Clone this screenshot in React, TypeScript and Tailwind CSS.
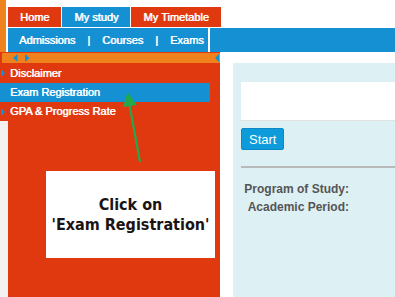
import React from 'react';

const menu = [
  { label: 'Disclaimer', active: false, arrow: true, h: 'h-[20px]' },
  { label: 'Exam Registration', active: true, arrow: false, h: 'h-[19px]' },
  { label: 'GPA & Progress Rate', active: false, arrow: true, h: 'h-[19px]' },
];

const tabs = [
  { label: 'Home', color: 'bg-[#e1390f]' },
  { label: 'My study', color: 'bg-[#1590d3]' },
  { label: 'My Timetable', color: 'bg-[#e1390f]' },
];

const shadow = '[text-shadow:0.6px_0_0_#fff]';

export default function App() {
  return (
    <div className="relative w-[395px] h-[297px] overflow-hidden bg-white font-['Liberation_Sans',Arial,sans-serif]">
      {/* Top navigation */}
      <div className="flex h-[52px]">
        <div className="w-[6px] bg-[#f0821e]" />
        <div className="w-[2px]" />
        <div className="flex-1 flex flex-col pt-[7px]">
          <div className="flex h-[20px] gap-px">
            {tabs.map((t) => (
              <div
                key={t.label}
                className={`${t.color} px-3 flex items-center text-[11px] text-white ${shadow}`}
              >
                {t.label}
              </div>
            ))}
          </div>
          <div className="flex h-[24px] mt-px gap-[2px]">
            <div className={`w-[200px] bg-[#1590d3] flex items-center pl-[11px] text-[11px] text-white ${shadow}`}>
              <span>Admissions</span>
              <span className="px-3">|</span>
              <span>Courses</span>
              <span className="px-3">|</span>
              <span>Exams</span>
            </div>
            <div className="flex-1 bg-[#1590d3]" />
          </div>
        </div>
      </div>

      <div className="flex">
        {/* Left side panel */}
        <div className="w-[220px] flex flex-col">
          <div className="bg-[#e1390f] pt-px">
            <div className="h-[10px] ml-[2px] bg-[#f0821e] relative">
              <svg width="220" height="10" className="absolute left-[-2px] top-0">
                <polygon points="17.5,1 13,5 17.5,9" fill="#1590d3" />
                <polygon points="25,1 29.5,5 25,9" fill="#1590d3" />
                <polygon points="219,1 215,5 219,9" fill="#1590d3" />
              </svg>
            </div>
            {menu.map((m) => (
              <div key={m.label} className={`${m.h} flex items-center relative`}>
                <div
                  className={`flex items-center h-full w-[210px] pl-[10px] text-[11px] text-white ${shadow} ${
                    m.active ? 'bg-[#1590d3]' : ''
                  }`}
                >
                  {m.label}
                </div>
                {m.arrow && (
                  <svg width="6" height="10" className="absolute left-px top-1/2 -translate-y-1/2">
                    <polygon points="0,1 4,5 0,9" fill="#1590d3" />
                  </svg>
                )}
              </div>
            ))}
          </div>
          <div className="flex h-[180px]">
            <div className="w-[8px] bg-[#f2f2f2]" />
            <div className="flex-1 bg-[#e1390f] pt-[50px] pl-[38px] pr-[5px]">
              <div className="h-[87px] bg-white flex flex-col items-center justify-center text-[16px] font-bold leading-[20px] text-[#1b1414] font-['DejaVu_Sans_Condensed','Liberation_Sans',sans-serif]">
                <span>Click on</span>
                <span>'Exam Registration'</span>
              </div>
            </div>
          </div>
        </div>

        <div className="w-[13px]" />

        {/* Main content */}
        <div className="flex-1 mt-[11px] bg-[#ddf0f3] pl-[8px] pt-[19px] h-[240px]">
          <div className="h-[39px] bg-white border-b border-[#e2e2e2]" />
          <button className="mt-[7px] h-[22px] px-[7px] bg-[#0d9bdc] border border-[#0b88c5] rounded-[2px] text-white text-[13px] leading-none">
            Start
          </button>
          <div className="mt-[15px] h-[2px] bg-[#b9b9b9]" />
          <div className="mt-[12px] w-[108px] text-right text-[12px] font-bold leading-[18px] text-[#555]">
            <div>Program of Study:</div>
            <div>Academic Period:</div>
          </div>
        </div>
      </div>

      {/* Annotation arrow */}
      <svg className="absolute inset-0 pointer-events-none" width="395" height="297">
        <line x1="140" y1="162" x2="129" y2="102" stroke="#25a84b" strokeWidth="2.2" />
        <polygon points="127.5,92 123,107 137,105" fill="#25a84b" />
      </svg>
    </div>
  );
}
